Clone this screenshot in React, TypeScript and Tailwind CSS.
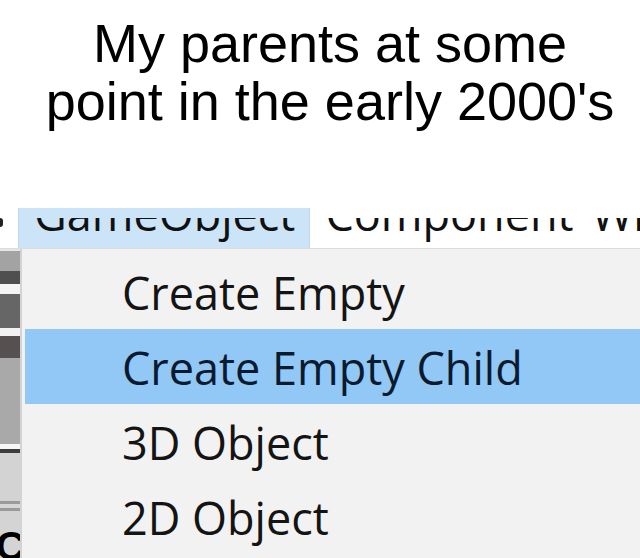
const menuFont = { fontFamily: '"Open Sans", "Noto Sans", sans-serif' };

// left editor strip, stacked top to bottom
const strip: { h: string; bg: string }[] = [
  { h: 'h-[2px]', bg: 'bg-[#e6e6e6]' },
  { h: 'h-[20px]', bg: 'bg-[#a3a3a3]' },
  { h: 'h-[13px]', bg: 'bg-[#4f4f4f]' },
  { h: 'h-[10px]', bg: 'bg-[#f4f4f4]' },
  { h: 'h-[34px]', bg: 'bg-[#666666]' },
  { h: 'h-[8px]', bg: 'bg-[#f2f2f2]' },
  { h: 'h-[22px]', bg: 'bg-[#575050]' },
  { h: 'h-[86px]', bg: 'bg-[#a9a9a9]' },
  { h: 'h-[5px]', bg: 'bg-[#f6f6f6]' },
  { h: 'h-[4px]', bg: 'bg-[#3c3c3c]' },
  { h: 'h-[48px]', bg: 'bg-[#d3d3d3]' },
  { h: 'h-[3px]', bg: 'bg-[#9a9a9a]' },
  { h: 'h-[4px]', bg: 'bg-[#d6d6d6]' },
  { h: 'h-[3px]', bg: 'bg-[#9a9a9a]' },
];

const items = ['Create Empty', 'Create Empty Child', '3D Object', '2D Object'];

// top of the menu bar is cropped away, only the lower half of the labels shows
function BarLabel({ text }: { text: string }) {
  return (
    <div className="h-[30px] overflow-hidden">
      <div className="-mt-[35px] leading-[61px] whitespace-nowrap">{text}</div>
    </div>
  );
}

export default function App() {
  return (
    <div className="w-[640px] h-[558px] bg-white overflow-hidden">
      {/* caption */}
      <div className="h-[208px] pt-[14px] pl-[20px] text-center">
        <p
          className="text-[54px] leading-[58px] text-black"
          style={{ fontFamily: '"Liberation Sans", Arial, sans-serif' }}
        >
          My parents at some
          <br />
          point in the early 2000's
        </p>
      </div>

      {/* cropped menu bar */}
      <div
        className="flex h-[41px] overflow-hidden border-b border-[#dcdcdc] text-[45px] text-[#111]"
        style={menuFont}
      >
        <div className="w-[18px] shrink-0 pt-[10px]">
          <div className="w-[3px] h-[9px] bg-[#222] rounded-r-full" />
        </div>
        <div className="shrink-0 bg-[#cce4f7] border-x border-[#b9d7f0] pl-[15px] pr-[14px] pt-[10px]">
          <BarLabel text="GameObject" />
        </div>
        <div className="shrink-0 px-[15px] pt-[10px]">
          <BarLabel text="Component" />
        </div>
        <div className="shrink-0 px-[3px] pt-[10px]">
          <BarLabel text="Window" />
        </div>
      </div>

      <div className="flex h-[310px]">
        {/* editor strip */}
        <div className="w-[22px] shrink-0 flex flex-col bg-[#d3d3d3] overflow-hidden">
          {strip.map((s, i) => (
            <div key={i} className={`${s.h} ${s.bg} w-[20px] shrink-0`} />
          ))}
          <div className="w-[20px] flex-1 bg-[#d4d4d4] overflow-hidden">
            <span
              className="block -ml-[4px] mt-[18px] text-[40px] leading-[34px] font-bold text-black"
              style={{ fontFamily: '"Liberation Sans", Arial, sans-serif' }}
            >
              C
            </span>
          </div>
        </div>

        {/* dropdown */}
        <div className="flex-1 bg-[#f2f2f2] pt-[5px] pl-[3px]" style={menuFont}>
          {items.map((label, i) => (
            <div
              key={label}
              className={`h-[75px] pt-[2px] pl-[97px] leading-[73px] text-[45px] whitespace-nowrap ${
                i === 1 ? 'bg-[#91c8f6] text-[#0b1a2e]' : 'text-[#141414]'
              }`}
            >
              {label}
            </div>
          ))}
        </div>
      </div>
    </div>
  );
}
